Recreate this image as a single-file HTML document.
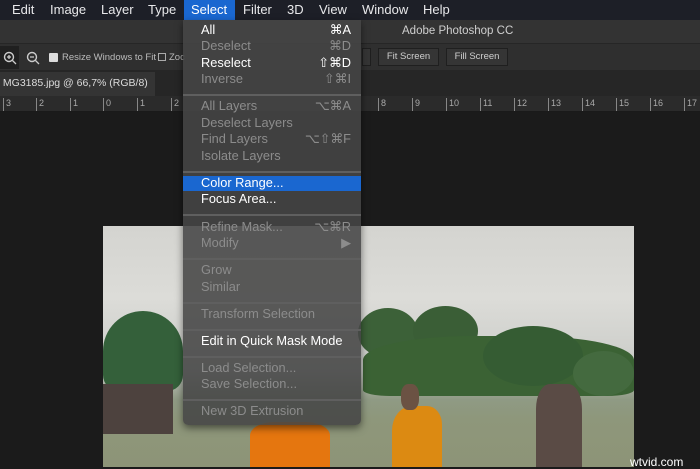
<!DOCTYPE html>
<html><head><meta charset="utf-8"><style>
*{margin:0;padding:0;box-sizing:border-box}
body{width:700px;height:467px;overflow:hidden;background:#1b1b1b;font-family:"Liberation Sans",sans-serif;position:relative}
.abs{position:absolute}
#menubar{left:0;top:0;width:700px;height:20px;background:#1d1f27;color:#e8e8ea;font-size:13px}
#menubar span{position:absolute;top:2px}
#title{left:0;top:20px;width:700px;height:23px;background:#333;color:#cfcfcf;font-size:11.5px}
#opts{left:0;top:43px;width:700px;height:27px;background:#2f2f2f;border-top:1px solid #262626;color:#bbb;font-size:9.5px}
.btn{position:absolute;top:48px;height:18px;border:1px solid #1f1f1f;background:#353535;color:#cfcfcf;font-size:9.5px;line-height:16px;text-align:center}
#tabs{left:0;top:70px;width:700px;height:26px;background:#262626}
#tab{left:0;top:72px;width:155px;height:24px;background:#343434;color:#dcdcdc;font-size:10.5px;line-height:22px}
#ruler{left:0;top:96px;width:700px;height:16px;background:#2b2b2b;border-bottom:1px solid #1a1a1a;color:#aaa;font-size:9px}
#ruler span{position:absolute;top:2px;border-left:1px solid #888;padding-left:2px;height:13px}
#photo{left:103px;top:226px;width:531px;height:241px;overflow:hidden;background:linear-gradient(#d4d4d0 0%,#dcdcd8 30%,#d0d1cd 50%,#c4c7c2 60%,#8f9a84 72%,#8e977b 80%,#8d9477 100%)}
#photo div{position:absolute}
#menu{left:183px;top:20px;width:178px;height:405px;background:rgba(70,70,70,0.88);border-radius:0 0 5px 5px;box-shadow:0 3px 8px rgba(0,0,0,.5);font-size:12.8px}
.it{position:absolute;left:18px;right:10px;height:16px;line-height:16px;color:#8c8c8c}
.it b{font-weight:normal;position:absolute;right:0;top:0}
.en{color:#fff}
.sep{position:absolute;left:0;right:0;height:2px;background:#5f5f5f}
</style></head><body>
<div id="menubar" class="abs">
<span style="left:12px">Edit</span><span style="left:50px">Image</span><span style="left:101px">Layer</span><span style="left:148px">Type</span>
<span style="left:184px;top:0;width:51px;height:20px;background:#1a67d0"></span><span style="left:191px;color:#fff">Select</span>
<span style="left:243px">Filter</span><span style="left:287px">3D</span><span style="left:319px">View</span><span style="left:362px">Window</span><span style="left:423px">Help</span>
</div>
<div id="title" class="abs"><span class="abs" style="left:402px;top:5px">Adobe Photoshop CC</span></div>
<div id="opts" class="abs">
<div class="abs" style="left:0;top:2px;width:19px;height:23px;background:#202020"></div>
<svg class="abs" style="left:3px;top:7px" width="14" height="14"><circle cx="6" cy="6" r="4.5" stroke="#ccc" stroke-width="1.4" fill="none"/><path d="M9.5 9.5L13 13M4 6h4M6 4v4" stroke="#ccc" stroke-width="1.3"/></svg>
<svg class="abs" style="left:26px;top:7px" width="14" height="14"><circle cx="6" cy="6" r="4.5" stroke="#ccc" stroke-width="1.4" fill="none"/><path d="M9.5 9.5L13 13M4 6h4" stroke="#ccc" stroke-width="1.3"/></svg>
<div class="abs" style="left:49px;top:9px;width:9px;height:9px;background:#ddd;border-radius:1px"></div>
<span class="abs" style="left:62px;top:8px">Resize Windows to Fit</span>
<div class="abs" style="left:158px;top:9px;width:8px;height:8px;border:1px solid #aaa"></div>
<span class="abs" style="left:169px;top:8px">Zoc</span>
</div>
<div class="btn abs" style="left:362px;width:9px"></div>
<div class="btn abs" style="left:378px;width:61px">Fit Screen</div>
<div class="btn abs" style="left:446px;width:62px">Fill Screen</div>
<div id="tabs" class="abs"></div>
<div id="tab" class="abs">&nbsp;MG3185.jpg @ 66,7% (RGB/8)</div>
<div id="ruler" class="abs">
<span style="left:3px">3</span><span style="left:36px">2</span><span style="left:70px">1</span><span style="left:103px">0</span><span style="left:137px">1</span><span style="left:171px">2</span>
<span style="left:378px">8</span><span style="left:412px">9</span><span style="left:446px">10</span><span style="left:480px">11</span><span style="left:514px">12</span><span style="left:548px">13</span><span style="left:582px">14</span><span style="left:616px">15</span><span style="left:650px">16</span><span style="left:684px">17</span>
</div>
<div id="photo" class="abs">
<div style="left:0;top:85px;width:80px;height:80px;background:#34603a;border-radius:50% 50% 20% 20%"></div>
<div style="left:255px;top:82px;width:60px;height:50px;background:#3c6138;border-radius:50%"></div>
<div style="left:310px;top:80px;width:65px;height:50px;background:#3a5e36;border-radius:50%"></div>
<div style="left:260px;top:110px;width:271px;height:60px;background:#3b6234;border-radius:40% 40% 10% 10%"></div>
<div style="left:380px;top:100px;width:100px;height:60px;background:#355c33;border-radius:50%"></div>
<div style="left:470px;top:125px;width:61px;height:45px;background:#446a3f;border-radius:50%"></div>
<div style="left:0;top:158px;width:70px;height:50px;background:#4d423e"></div>
<div style="left:147px;top:196px;width:80px;height:45px;background:#e5760f;border-radius:30% 30% 0 0"></div>
<div style="left:289px;top:180px;width:50px;height:61px;background:#dc8a12;border-radius:40% 30% 0 0"></div>
<div style="left:298px;top:158px;width:18px;height:26px;background:#6b5243;border-radius:40%"></div>
<div style="left:433px;top:158px;width:46px;height:83px;background:#5a4b45;border-radius:30% 30% 0 0"></div>
</div>
<span class="abs" style="left:630px;top:455px;font-size:12px;color:#fff">wtvid.com</span>
<div id="menu" class="abs">
<div class="it en" style="top:2px">All<b>⌘A</b></div>
<div class="it" style="top:18px">Deselect<b>⌘D</b></div>
<div class="it en" style="top:35px">Reselect<b>⇧⌘D</b></div>
<div class="it" style="top:51px">Inverse<b>⇧⌘I</b></div>
<div class="sep" style="top:74px"></div>
<div class="it" style="top:78px">All Layers<b>⌥⌘A</b></div>
<div class="it" style="top:95px">Deselect Layers</div>
<div class="it" style="top:111px">Find Layers<b>⌥⇧⌘F</b></div>
<div class="it" style="top:128px">Isolate Layers</div>
<div class="sep" style="top:151px"></div>
<div class="abs" style="left:0;right:0;top:156px;height:15px;background:#1a67d0"></div>
<div class="it en" style="top:155px">Color Range...</div>
<div class="it en" style="top:171px">Focus Area...</div>
<div class="sep" style="top:194px"></div>
<div class="it" style="top:199px">Refine Mask...<b>⌥⌘R</b></div>
<div class="it" style="top:215px">Modify<b>▶</b></div>
<div class="sep" style="top:238px"></div>
<div class="it" style="top:242px">Grow</div>
<div class="it" style="top:259px">Similar</div>
<div class="sep" style="top:282px"></div>
<div class="it" style="top:286px">Transform Selection</div>
<div class="sep" style="top:309px"></div>
<div class="it en" style="top:313px">Edit in Quick Mask Mode</div>
<div class="sep" style="top:336px"></div>
<div class="it" style="top:340px">Load Selection...</div>
<div class="it" style="top:356px">Save Selection...</div>
<div class="sep" style="top:379px"></div>
<div class="it" style="top:383px">New 3D Extrusion</div>
</div>
</body></html>
